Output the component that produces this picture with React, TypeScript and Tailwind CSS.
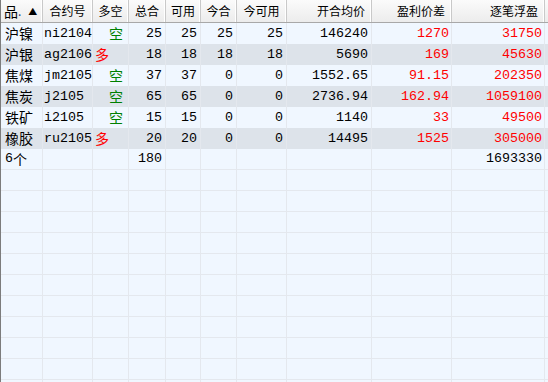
import React from "react";

const CN = '"Noto Sans CJK SC", "Liberation Sans", sans-serif';
const MONO = '"Liberation Mono", "Noto Sans CJK SC", monospace';

type Row = {
  name: string;
  code: string;
  dir: "多" | "空";
  total: string;
  avail: string;
  today: string;
  todayAvail: string;
  price: string;
  diff: string;
  pnl: string;
};

const rows: Row[] = [
  { name: "沪镍", code: "ni2104", dir: "空", total: "25", avail: "25", today: "25", todayAvail: "25", price: "146240", diff: "1270", pnl: "31750" },
  { name: "沪银", code: "ag2106", dir: "多", total: "18", avail: "18", today: "18", todayAvail: "18", price: "5690", diff: "169", pnl: "45630" },
  { name: "焦煤", code: "jm2105", dir: "空", total: "37", avail: "37", today: "0", todayAvail: "0", price: "1552.65", diff: "91.15", pnl: "202350" },
  { name: "焦炭", code: "j2105", dir: "空", total: "65", avail: "65", today: "0", todayAvail: "0", price: "2736.94", diff: "162.94", pnl: "1059100" },
  { name: "铁矿", code: "i2105", dir: "空", total: "15", avail: "15", today: "0", todayAvail: "0", price: "1140", diff: "33", pnl: "49500" },
  { name: "橡胶", code: "ru2105", dir: "多", total: "20", avail: "20", today: "0", todayAvail: "0", price: "14495", diff: "1525", pnl: "305000" },
];

const GRID =
  "grid grid-cols-[42px_50px_36px_37px_35px_36px_50px_85px_80px_93px_1fr]";

function HeadCell({ children, align = "center" }: { children?: React.ReactNode; align?: "center" | "right" | "left" }) {
  const a =
    align === "center" ? "justify-center" : align === "right" ? "justify-end pr-[6px]" : "justify-start pl-[3px]";
  return (
    <div
      className={`flex items-center ${a} h-full border-r border-[#c9c9c9] shadow-[inset_-1px_0_0_#ffffff] text-[12px] text-black whitespace-nowrap overflow-hidden`}
      style={{ fontFamily: CN }}
    >
      {children}
    </div>
  );
}

function Cell({
  children,
  cls = "",
  font = MONO,
}: {
  children?: React.ReactNode;
  cls?: string;
  font?: string;
}) {
  return (
    <div
      className={`flex items-center h-full border-r border-[#e4e8ee] whitespace-nowrap overflow-hidden ${cls}`}
      style={{ fontFamily: font }}
    >
      {children}
    </div>
  );
}

export default function App() {
  const empties = Array.from({ length: 11 });
  return (
    <div className="w-[548px] h-[382px] overflow-hidden bg-[#f0f7ff] border-l border-[#7c7c7c]">
      {/* header */}
      <div className={`${GRID} h-[23px] bg-gradient-to-b from-[#fbfbfb] to-[#ececec] border-b border-[#a8a8a8]`}>
        <HeadCell align="left">
          <span className="text-[14px] leading-none">品</span>
          <span className="text-[#203a7a] text-[12px] leading-none">.</span>
          <span className="ml-[7px] text-[9px] leading-none">▲</span>
        </HeadCell>
        <HeadCell>合约号</HeadCell>
        <HeadCell>多空</HeadCell>
        <HeadCell>总合</HeadCell>
        <HeadCell>可用</HeadCell>
        <HeadCell>今合</HeadCell>
        <HeadCell>今可用</HeadCell>
        <HeadCell align="right">开合均价</HeadCell>
        <HeadCell align="right">盈利价差</HeadCell>
        <HeadCell align="right">逐笔浮盈</HeadCell>
        <div className="h-full" />
      </div>

      {/* data */}
      {rows.map((r, i) => (
        <div
          key={r.code}
          className={`${GRID} h-[21px] ${i % 2 === 0 ? "bg-[#f0f7ff]" : "bg-[#dde3ea]"} text-[13.33px] text-black`}
        >
          <Cell cls="pl-[4px] text-[14px]" font={CN}>{r.name}</Cell>
          <Cell cls="pl-[1px]">{r.code}</Cell>
          {r.dir === "空" ? (
            <Cell cls="justify-end pr-[5px] text-[14px] text-[#008000]" font={CN}>空</Cell>
          ) : (
            <Cell cls="justify-start pl-[2px] text-[14px] text-[#ff0000]" font={CN}>多</Cell>
          )}
          <Cell cls="justify-end pr-[3px]">{r.total}</Cell>
          <Cell cls="justify-end pr-[3px]">{r.avail}</Cell>
          <Cell cls="justify-end pr-[3px]">{r.today}</Cell>
          <Cell cls="justify-end pr-[3px]">{r.todayAvail}</Cell>
          <Cell cls="justify-end pr-[3px]">{r.price}</Cell>
          <Cell cls="justify-end pr-[2px] text-[#ff0000]">{r.diff}</Cell>
          <Cell cls="justify-end pr-[2px] text-[#ff0000]">{r.pnl}</Cell>
          <div className="h-full" />
        </div>
      ))}

      {/* total */}
      <div className={`${GRID} h-[21px] bg-[#f0f7ff] text-[13.33px] text-black border-b border-[#e4e8ee]`}>
        <Cell cls="pl-[4px]">
          <span>6</span>
          <span className="text-[14px]" style={{ fontFamily: CN }}>个</span>
        </Cell>
        <Cell />
        <Cell />
        <Cell cls="justify-end pr-[3px]">180</Cell>
        <Cell />
        <Cell />
        <Cell />
        <Cell />
        <Cell />
        <Cell cls="justify-end pr-[2px]">1693330</Cell>
        <div className="h-full" />
      </div>

      {/* empty rows */}
      {empties.map((_, i) => (
        <div key={i} className={`${GRID} h-[21px] bg-[#f0f7ff] border-b border-[#e4e8ee]`}>
          {Array.from({ length: 10 }).map((__, j) => (
            <Cell key={j} />
          ))}
          <div className="h-full" />
        </div>
      ))}
    </div>
  );
}
